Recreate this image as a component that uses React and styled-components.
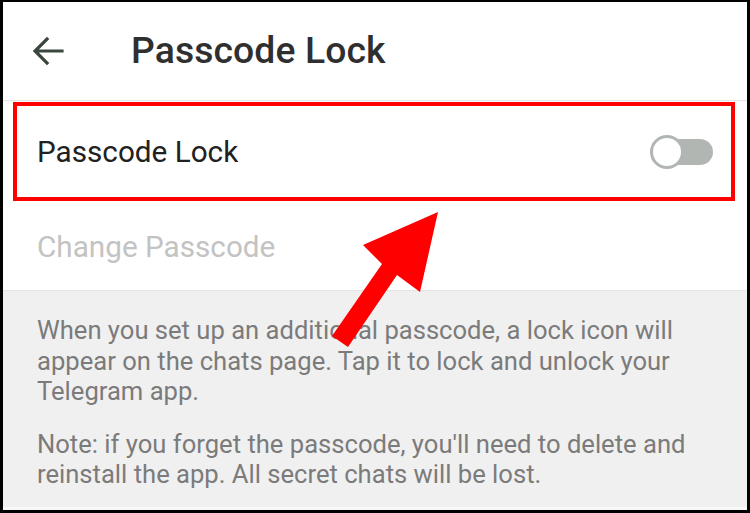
import React from "react";
import styled, { createGlobalStyle } from "styled-components";

const GlobalStyle = createGlobalStyle`
  html, body {
    margin: 0;
    padding: 0;
    background: #000;
  }
  body {
    font-family: Roboto, "Noto Sans", sans-serif;
  }
`

const Frame = styled.div`
  position: relative;
  width: 750px;
  height: 513px;
  box-sizing: border-box;
  border-style: solid;
  border-color: #000;
  border-width: 2px 3px 3px 3px;
  background: #fff;
  display: flex;
  flex-direction: column;
  overflow: hidden;
`
const Header = styled.div`
  height: 98px;
  flex-shrink: 0;
  display: flex;
  align-items: center;
  border-bottom: 1px solid #e6e6e6;
  box-shadow: 0 1px 2px rgba(0, 0, 0, 0.04);
`
const BackButton = styled.div`
  width: 128px;
  display: flex;
  align-items: center;
  padding-left: 29px;
  box-sizing: border-box;
`
const Title = styled.div`
  font-size: 37.3px;
  font-weight: 500;
  color: #2f2f2f;
  letter-spacing: 0.1px;
  margin-top: -2px;
`
const HighlightRow = styled.div`
  margin: 1px 12px 0 10px;
  height: 99px;
  box-sizing: border-box;
  border: 4px solid #ff0000;
  display: flex;
  align-items: center;
  justify-content: space-between;
  padding: 0 18px 0 20px;
`
const Row = styled.div`
  height: 89px;
  display: flex;
  align-items: center;
  padding-left: 34px;
`
const RowLabel = styled.div`
  font-size: 29.7px;
  color: ${(p) => (p.$disabled ? "#c3c3c3" : "#212121")};
  margin-top: ${(p) => (p.$disabled ? "2px" : "0")};
`
const Toggle = styled.div`
  position: relative;
  width: 63px;
  height: 34px;
`
const Track = styled.div`
  position: absolute;
  right: 0;
  top: 4px;
  width: 52px;
  height: 26px;
  border-radius: 13px;
  background: #b1b6b3;
`
const Knob = styled.div`
  position: absolute;
  left: 0;
  top: 0;
  width: 34px;
  height: 34px;
  box-sizing: border-box;
  border-radius: 50%;
  border: 3px solid #b1b6b3;
  background: #fff;
`
const InfoSection = styled.div`
  flex: 1;
  background: #f0f0f0;
  border-top: 1px solid #e4e4e4;
  border-bottom: 3px solid #f8f8f8;
  padding: 24px 44px 0 34px;
  display: flex;
  flex-direction: column;
  gap: 22px;
`
const InfoText = styled.p`
  margin: 0;
  font-size: 25.6px;
  line-height: 30.5px;
  color: #7b7b7b;
`
const Pointer = styled.svg`
  position: absolute;
  left: -3px;
  top: -2px;
  pointer-events: none;
`

const BackArrow = () => (
  <svg width="32" height="32" viewBox="0 0 32 32">
    <path
      d="M30 16H4M15 4L3 16l12 12"
      fill="none"
      stroke="#3b463c"
      strokeWidth="3.2"
      strokeLinecap="square"
    />
  </svg>
);

const App = () => {
  return <>
    <GlobalStyle />
    <Frame>
      <Header>
        <BackButton><BackArrow /></BackButton>
        <Title>Passcode Lock</Title>
      </Header>
      <HighlightRow>
        <RowLabel>Passcode Lock</RowLabel>
        <Toggle>
          <Track />
          <Knob />
        </Toggle>
      </HighlightRow>
      <Row>
        <RowLabel $disabled>Change Passcode</RowLabel>
      </Row>
      <InfoSection>
        <InfoText>
          When you set up an additional passcode, a lock icon will appear on the chats page. Tap it to lock and unlock your Telegram app.
        </InfoText>
        <InfoText>
          Note: if you forget the passcode, you'll need to delete and reinstall the app. All secret chats will be lost.
        </InfoText>
      </InfoSection>
      <Pointer width="750" height="513" viewBox="0 0 750 513">
        <polygon
          points="438,212 363,245 382,264 332,336 348,347 397,275 420,292"
          fill="#ff0000"
        />
      </Pointer>
    </Frame>
  </>
};

export default App;
